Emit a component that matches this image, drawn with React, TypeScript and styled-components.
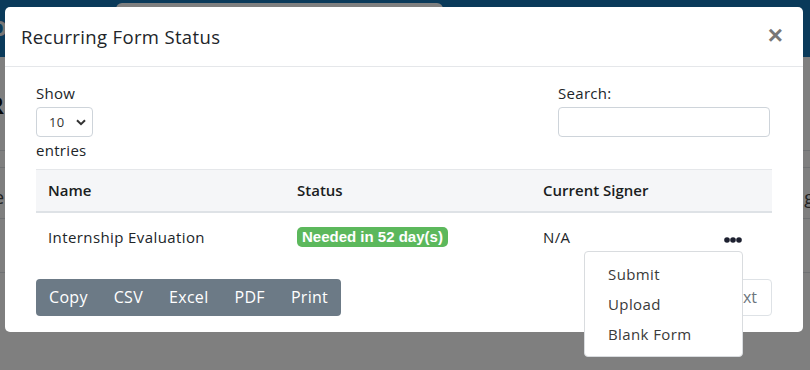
import styled, { createGlobalStyle } from 'styled-components';

const GlobalStyle = createGlobalStyle`
	html, body {
		margin: 0;
		padding: 0;
		width: 810px;
		height: 370px;
		overflow: hidden;
		font-family: 'Open Sans', 'Liberation Sans', sans-serif;
		color: #212529;
		background: #fff;
	}
	* {
		box-sizing: border-box;
	}
`;

const Page = styled.div`
	width: 810px;
	height: 370px;
	position: relative;
	overflow: hidden;
	background: #fff;
`;

const TopBar = styled.header`
	height: 57px;
	background: #1474b4;
	display: flex;
	align-items: flex-start;
	gap: 40px;
	padding: 3px 0 0 0;
`;

const Logo = styled.span`
	font-size: 22px;
	font-weight: 700;
	color: #eee;
	margin: 9px 0 0 -10px;
`;

const SearchBar = styled.div`
	width: 327px;
	height: 30px;
	margin-left: 68px;
	background: #fff;
	border-radius: 6px;
`;

const Heading = styled.h2`
	margin: 36px 0 0 -12px;
	font-size: 24px;
	line-height: 24px;
	font-weight: 700;
	color: #111;
`;

const BackTable = styled.div`
	margin-top: 33px;
`;

const BackRow = styled.div<{ h: number }>`
	height: ${(p) => p.h}px;
	border-top: 1px solid #dee2e6;
	display: flex;
	justify-content: space-between;
	align-items: center;
	padding-top: 8px;
	font-size: 18px;
	color: #444;
`;

const EdgeText = styled.span<{ side: 'left' | 'right' }>`
	${(p) => (p.side === 'left' ? 'margin-left: -6px;' : 'margin-right: -4px;')}
`;

const Backdrop = styled.div`
	position: absolute;
	inset: 0;
	background: rgba(0, 0, 0, 0.5);
`;

const Modal = styled.div`
	position: absolute;
	left: 5px;
	top: 7px;
	width: 798px;
	background: #fff;
	border-radius: 5px;
	display: flex;
	flex-direction: column;
`;

const ModalHeader = styled.div`
	height: 60px;
	border-bottom: 1px solid #e5e7ea;
	display: flex;
	align-items: center;
	justify-content: space-between;
	padding: 0 20px 0 16px;
`;

const Title = styled.h5`
	margin: 0;
	font-size: 18.5px;
	font-weight: 500;
	color: #212529;
	letter-spacing: 0.35px;
`;

const Close = styled.span`
	font-family: 'Liberation Sans', sans-serif;
	font-size: 26px;
	font-weight: 700;
	color: #777;
	line-height: 1;
	margin-top: -4px;
`;

const ModalBody = styled.div`
	position: relative;
	padding: 15px 31px 16px 31px;
	display: flex;
	flex-direction: column;
`;

const Controls = styled.div`
	display: flex;
	justify-content: space-between;
	align-items: flex-start;
`;

const LabelStack = styled.label<{ right?: boolean }>`
	display: flex;
	flex-direction: column;
	align-items: flex-start;
	font-size: 15px;
	line-height: 22px;
	letter-spacing: 0.3px;
	color: #212529;
	${(p) => (p.right ? 'margin-right: 2px;' : '')}
`;

const SelectBox = styled.div`
	width: 57px;
	height: 30px;
	margin: 3px 0 2px;
	border: 1px solid #ced4da;
	border-radius: 4px;
	display: flex;
	align-items: center;
	justify-content: space-between;
	padding: 0 6px 0 12px;
	font-size: 13px;
	color: #333;
`;

const SearchInput = styled.input`
	width: 212px;
	height: 30px;
	margin-top: 3px;
	border: 1px solid #ced4da;
	border-radius: 4px;
	outline: none;
`;

const Table = styled.table`
	margin-top: 8px;
	width: 736px;
	border-collapse: collapse;
	table-layout: fixed;
	font-size: 15px;
`;

const Th = styled.th<{ w?: number }>`
	${(p) => (p.w ? `width: ${p.w}px;` : '')}
	height: 42px;
	background: #f5f6f8;
	border-top: 1px solid #e5e7ea;
	border-bottom: 2px solid #dee2e6;
	text-align: left;
	padding: 0 12px;
	font-weight: 600;
	color: #1a1d21;
`;

const Td = styled.td`
	height: 49px;
	padding: 0 12px;
	color: #212529;
	letter-spacing: 0.4px;
`;

const DotsCell = styled(Td)`
	text-align: right;
	padding-right: 30px;
`;

const Badge = styled.span`
	display: inline-block;
	background: #5cb85c;
	color: #fff;
	font-family: 'Liberation Sans', Arial, sans-serif;
	font-weight: 700;
	font-size: 15px;
	line-height: 20px;
	padding: 0 5px;
	border-radius: 5px;
	letter-spacing: 0;
`;

const Footer = styled.div`
	margin-top: 18px;
	display: flex;
	justify-content: space-between;
	align-items: center;
`;

const ButtonGroup = styled.div`
	display: flex;
	background: #6c7a86;
	border-radius: 4px;
	overflow: hidden;
`;

const ExportButton = styled.button`
	height: 37px;
	border: none;
	background: transparent;
	color: #fff;
	font-family: inherit;
	font-size: 16px;
	letter-spacing: 0.3px;
	padding: 0 13px;
`;

const Pager = styled.div`
	display: flex;
`;

const PageButton = styled.button<{ active?: boolean; narrow?: boolean }>`
	height: 37px;
	border: 1px solid #dee2e6;
	margin-left: -1px;
	background: ${(p) => (p.active ? '#0d6efd' : '#fff')};
	color: ${(p) => (p.active ? '#fff' : '#6c757d')};
	font-family: inherit;
	font-size: 16px;
	padding: 0 ${(p) => (p.narrow ? 8 : 14)}px;
	&:last-child {
		border-radius: 0 4px 4px 0;
	}
	&:first-child {
		border-radius: 4px 0 0 4px;
	}
`;

const Menu = styled.ul`
	position: absolute;
	left: 579px;
	top: 184px;
	width: 159px;
	margin: 0;
	padding: 7px 0;
	list-style: none;
	background: #fff;
	border: 1px solid #d9dcdf;
	border-radius: 4px;
`;

const MenuItem = styled.li`
	height: 30px;
	line-height: 30px;
	padding: 0 23px;
	font-size: 15px;
	letter-spacing: 0.4px;
	color: #3a3a3a;
`;

const Chevron = () => (
	<svg width="10" height="7" viewBox="0 0 10 7">
		<path d="M1 1.2 5 5.2 9 1.2" fill="none" stroke="#333" strokeWidth="2" />
	</svg>
);

const Dots = () => (
	<svg width="18" height="6" viewBox="0 0 18 6">
		<circle cx="3" cy="3" r="2.8" fill="#1d2030" />
		<circle cx="9" cy="3" r="2.8" fill="#1d2030" />
		<circle cx="15" cy="3" r="2.8" fill="#1d2030" />
	</svg>
);

const rows = [{ name: 'Internship Evaluation', status: 'Needed in 52 day(s)', signer: 'N/A' }];

export default function App() {
	return (
		<Page>
			<GlobalStyle />
			<TopBar>
				<Logo>O</Logo>
				<SearchBar />
			</TopBar>
			<Heading>R</Heading>
			<BackTable>
				<BackRow h={17} />
				<BackRow h={51}>
					<EdgeText side="left">e</EdgeText>
					<EdgeText side="right">g</EdgeText>
				</BackRow>
				<BackRow h={54} />
				<BackRow h={60} />
			</BackTable>
			<Backdrop />
			<Modal>
				<ModalHeader>
					<Title>Recurring Form Status</Title>
					<Close>×</Close>
				</ModalHeader>
				<ModalBody>
					<Controls>
						<LabelStack>
							Show
							<SelectBox>
								10
								<Chevron />
							</SelectBox>
							entries
						</LabelStack>
						<LabelStack right>
							Search:
							<SearchInput />
						</LabelStack>
					</Controls>
					<Table>
						<thead>
							<tr>
								<Th w={249}>Name</Th>
								<Th w={246}>Status</Th>
								<Th w={160}>Current Signer</Th>
								<Th />
							</tr>
						</thead>
						<tbody>
							{rows.map((r) => (
								<tr key={r.name}>
									<Td>{r.name}</Td>
									<Td>
										<Badge>{r.status}</Badge>
									</Td>
									<Td>{r.signer}</Td>
									<DotsCell>
										<Dots />
									</DotsCell>
								</tr>
							))}
						</tbody>
					</Table>
					<Footer>
						<ButtonGroup>
							{['Copy', 'CSV', 'Excel', 'PDF', 'Print'].map((b) => (
								<ExportButton key={b}>{b}</ExportButton>
							))}
						</ButtonGroup>
						<Pager>
							<PageButton narrow>Previous</PageButton>
							<PageButton narrow active>
								1
							</PageButton>
							<PageButton>Next</PageButton>
						</Pager>
					</Footer>
					<Menu>
						<MenuItem>Submit</MenuItem>
						<MenuItem>Upload</MenuItem>
						<MenuItem>Blank Form</MenuItem>
					</Menu>
				</ModalBody>
			</Modal>
		</Page>
	);
}
